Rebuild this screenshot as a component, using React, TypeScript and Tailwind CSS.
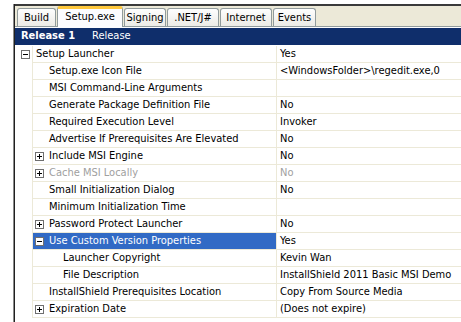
import React from "react";

type Row = {
  name: string;
  value?: string;
  level: 0 | 1 | 2;
  box?: "+" | "-";
  gray?: boolean;
  selected?: boolean;
};

const rows: Row[] = [
  { name: "Setup Launcher", value: "Yes", level: 0, box: "-" },
  { name: "Setup.exe Icon File", value: "<WindowsFolder>\\regedit.exe,0", level: 1 },
  { name: "MSI Command-Line Arguments", value: "", level: 1 },
  { name: "Generate Package Definition File", value: "No", level: 1 },
  { name: "Required Execution Level", value: "Invoker", level: 1 },
  { name: "Advertise If Prerequisites Are Elevated", value: "No", level: 1 },
  { name: "Include MSI Engine", value: "No", level: 1, box: "+" },
  { name: "Cache MSI Locally", value: "No", level: 1, box: "+", gray: true },
  { name: "Small Initialization Dialog", value: "No", level: 1 },
  { name: "Minimum Initialization Time", value: "", level: 1 },
  { name: "Password Protect Launcher", value: "No", level: 1, box: "+" },
  { name: "Use Custom Version Properties", value: "Yes", level: 1, box: "-", selected: true },
  { name: "Launcher Copyright", value: "Kevin Wan", level: 2 },
  { name: "File Description", value: "InstallShield 2011 Basic MSI Demo", level: 2 },
  { name: "InstallShield Prerequisites Location", value: "Copy From Source Media", level: 1 },
  { name: "Expiration Date", value: "(Does not expire)", level: 1, box: "+" },
];

function Box({ sign }: { sign: "+" | "-" }) {
  return (
    <div className="relative w-[9px] h-[9px] border border-[#6f6f6f] bg-white shrink-0">
      <div className="absolute left-[1px] top-[3px] w-[5px] h-[1px] bg-black" />
      {sign === "+" && <div className="absolute left-[3px] top-[1px] w-[1px] h-[5px] bg-black" />}
    </div>
  );
}

const tabs = ["Build", "Setup.exe", "Signing", ".NET/J#", "Internet", "Events"];
const tabWidths = [39, 66, 42, 52, 52, 43];

export default function App() {
  return (
    <div
      className="w-[461px] h-[322px] bg-white flex overflow-hidden text-[11px] text-black"
      style={{ fontFamily: "'DejaVu Sans Condensed', 'Liberation Sans', Arial, sans-serif" }}
    >
      <div className="w-[13px] shrink-0 bg-white" />
      <div className="w-[1px] shrink-0 bg-[#8a8a8a] mt-[4px]" />
      <div className="w-[1px] shrink-0 bg-[#202020] mt-[4px]" />
      <div className="flex-1 flex flex-col">
        <div className="h-[4px] bg-white shrink-0" />
        <div className="h-[2px] bg-[#3a3a3a] shrink-0" />
        {/* tab strip */}
        <div className="h-[21px] shrink-0 bg-[#ECE9D8] flex items-end pl-[2px] border-b border-[#919B9C]">
          {tabs.map((t, i) => {
            const sel = i === 1;
            return (
              <div
                key={t}
                style={{ width: tabWidths[i] }}
                className={
                  sel
                    ? "h-[21px] -mb-[1px] bg-[#FCFCFE] border border-b-0 border-[#919B9C] rounded-t-[3px] border-t-[3px] border-t-[#FFC83C] flex items-center justify-center pb-[1px] mr-[1px]"
                    : "h-[18px] bg-gradient-to-b from-[#FEFEFE] to-[#ECEBE6] border border-b-0 border-[#919B9C] rounded-t-[3px] flex items-center justify-center pt-[1px] mr-[1px]"
                }
              >
                {t}
              </div>
            );
          })}
        </div>
        <div className="h-[1px] shrink-0 bg-[#FCFCFE]" />
        {/* header */}
        <div className="h-[17px] shrink-0 bg-[#0F2E6B] flex items-center text-white pl-[6px]">
          <span className="font-bold w-[71px]">Release 1</span>
          <span>Release</span>
        </div>
        <div className="h-[1px] shrink-0 bg-white" />
        {/* rows */}
        {rows.map((r, i) => (
          <div key={i} className="h-[17px] shrink-0 flex">
            <div className="w-[17px] shrink-0 bg-white flex items-center pl-[6px]">
              {r.level === 0 && r.box && <Box sign={r.box} />}
            </div>
            <div
              className={
                "w-[244px] shrink-0 border-l border-b border-[#ECE9D8] flex items-center pt-[1px] whitespace-nowrap overflow-hidden " +
                (r.selected ? "bg-[#316AC5] text-white" : "")
              }
            >
              {r.level === 0 && <span className="pl-[3px]">{r.name}</span>}
              {r.level === 1 && (
                <>
                  <div className="w-[16px] shrink-0 pl-[2px]">{r.box && <Box sign={r.box} />}</div>
                  <span className={r.gray ? "text-[#A0A0A0]" : ""}>{r.name}</span>
                </>
              )}
              {r.level === 2 && <span className="pl-[30px]">{r.name}</span>}
            </div>
            <div
              className={
                "flex-1 border-l border-b border-[#ECE9D8] flex items-center pt-[1px] pl-[3px] whitespace-nowrap " +
                (r.gray ? "text-[#A0A0A0]" : "")
              }
            >
              {r.value}
            </div>
          </div>
        ))}
      </div>
    </div>
  );
}
